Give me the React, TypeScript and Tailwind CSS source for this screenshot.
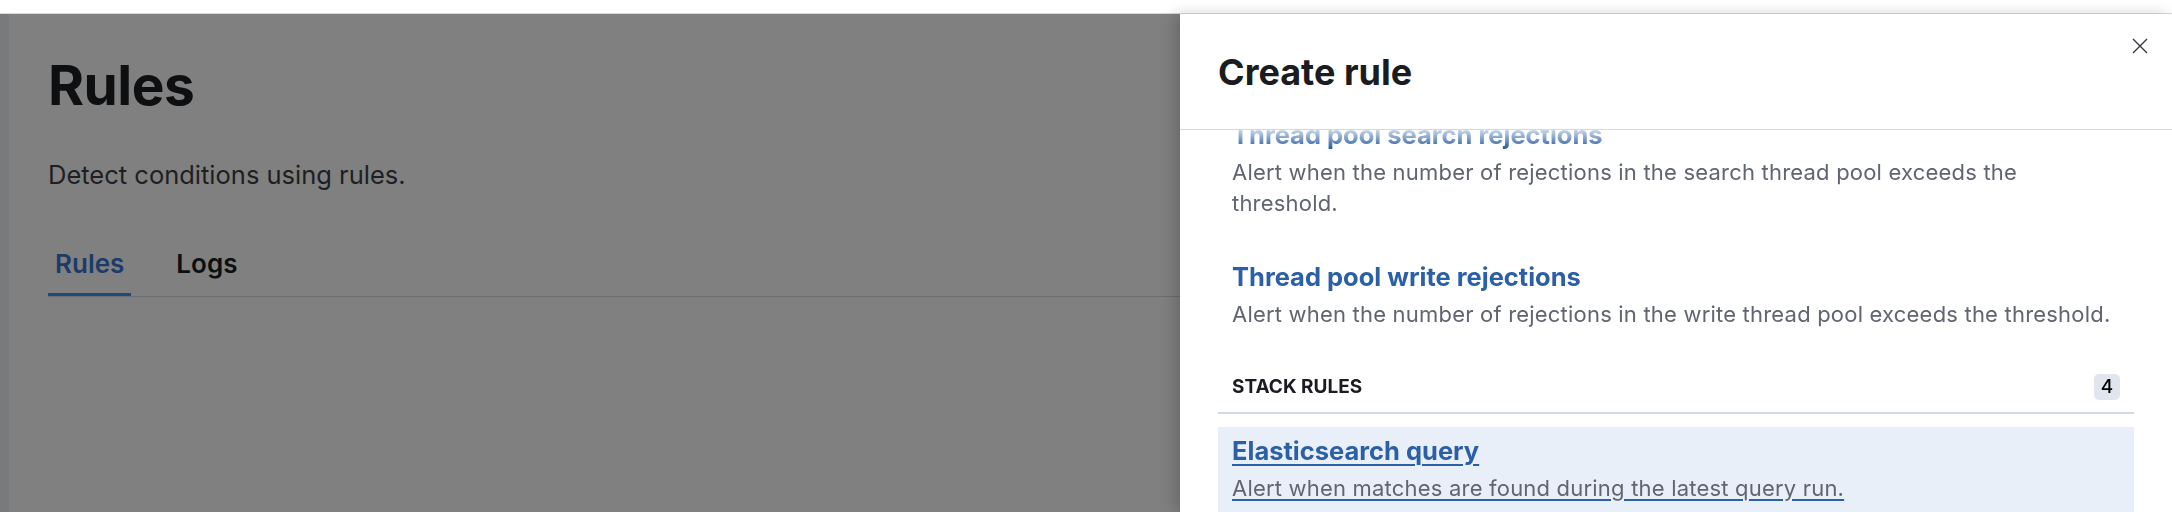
import React from "react";

type RuleType = {
  name: string;
  description: string;
  active?: boolean;
};

const monitoringRules: RuleType[] = [
  {
    name: "Thread pool search rejections",
    description:
      "Alert when the number of rejections in the search thread pool exceeds the threshold.",
  },
  {
    name: "Thread pool write rejections",
    description:
      "Alert when the number of rejections in the write thread pool exceeds the threshold.",
  },
];

const stackRules: RuleType[] = [
  {
    name: "Elasticsearch query",
    description: "Alert when matches are found during the latest query run.",
    active: true,
  },
];

function RuleItem({ rule }: { rule: RuleType }) {
  return (
    <div className={`px-[14px] pt-[6px] ${rule.active ? "bg-[#e9eff8] pb-[20px]" : "pb-[6px]"}`}>
      <div
        className={`text-[25.5px] leading-[36px] font-bold text-[#2b5fa6] ${
          rule.active ? "underline decoration-[2px] underline-offset-[4px]" : ""
        }`}
      >
        {rule.name}
      </div>
      <p
        className={`mt-[4px] text-[22px] leading-[31px] tracking-[0.2px] text-[#60656f] ${
          rule.active ? "underline decoration-[#2b5fa6] decoration-[2px] underline-offset-[3px]" : ""
        }`}
      >
        {rule.description}
      </p>
    </div>
  );
}

export default function App() {
  return (
    <div className="h-[512px] w-full overflow-hidden bg-white [font-family:Inter,'Noto_Sans',sans-serif]">
      {/* Kibana header edge */}
      <div className="h-[14px] border-b border-[#d3dae6] bg-white" />

      <div className="flex h-[498px]">
        {/* Page under the overlay */}
        <div className="flex w-[1180px] bg-[#808080]">
          <div className="w-[9px] bg-[#797a7c]" />
          <div className="flex-1 pl-[39px] pt-[38px]">
            <h1 className="text-[55px] leading-[66px] font-bold tracking-[-0.5px] text-[#0e0f11]">
              Rules
            </h1>
            <p className="mt-[39px] text-[25.5px] leading-[36px] text-[#1e1f23]">
              Detect conditions using rules.
            </p>
            {/* Tabs */}
            <div className="mt-[56px] flex gap-[38px] border-b border-[#6c6e73]">
              <div className="border-b-[3px] border-[#1f4a80] px-[7px] pb-[14px] text-[26px] leading-[30px] font-semibold text-[#1c3b68]">
                Rules
              </div>
              <div className="px-[7px] pb-[17px] text-[26px] leading-[30px] font-semibold text-[#0e0f11]">
                Logs
              </div>
            </div>
          </div>
        </div>

        {/* Flyout */}
        <aside className="relative flex w-[992px] flex-col bg-white shadow-[-6px_0_14px_rgba(0,0,0,0.18)]">
          <div className="border-b border-[#d3dae6] px-[38px] pt-[34px] pb-[33px]">
            <h2 className="text-[36px] leading-[48px] font-bold text-[#1a1c21]">Create rule</h2>
          </div>
          <button className="absolute top-[20px] right-[20px] flex h-[24px] w-[24px] items-center justify-center">
            <svg width="16" height="16" viewBox="0 0 16 16" fill="none">
              <path d="M1 1l14 14M15 1L1 15" stroke="#343741" strokeWidth="1.4" />
            </svg>
          </button>

          <div className="flex-1 overflow-hidden px-[38px] [mask-image:linear-gradient(to_bottom,rgba(0,0,0,0.25)_0px,black_18px)]">
            <div className="-mt-[19px]">
              <div className="flex flex-col gap-[28px]">
                {monitoringRules.map((r) => (
                  <RuleItem key={r.name} rule={r} />
                ))}
              </div>

              <div className="mt-[38px] flex items-center justify-between border-b-2 border-[#d3dae6] px-[14px] pb-[12px]">
                <span className="text-[19px] leading-[26px] font-bold text-[#1a1c21]">STACK RULES</span>
                <span className="flex h-[26px] w-[26px] items-center justify-center rounded-[5px] bg-[#e0e5ee] text-[19px] font-medium text-[#000]">
                  4
                </span>
              </div>

              <div className="mt-[13px]">
                {stackRules.map((r) => (
                  <RuleItem key={r.name} rule={r} />
                ))}
              </div>
            </div>
          </div>
        </aside>
      </div>
    </div>
  );
}
